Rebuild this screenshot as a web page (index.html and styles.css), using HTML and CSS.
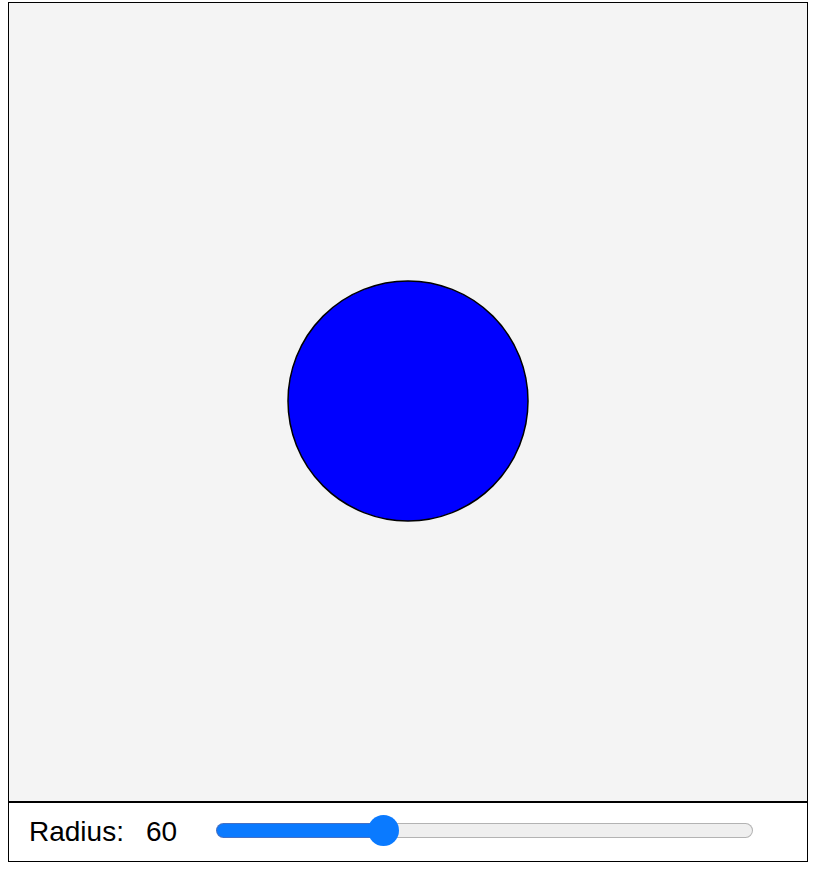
FILE: index.html
```html
<!DOCTYPE html>
<html lang="en">
<head>
<meta charset="utf-8">
<title>Radius</title>
<link rel="stylesheet" href="styles.css">
</head>
<body>
<div class="app">
  <div class="canvas">
    <svg class="stage" width="798" height="798" viewBox="0 0 798 798" xmlns="http://www.w3.org/2000/svg">
      <circle cx="399" cy="398" r="120" fill="#0000ff" stroke="#000" stroke-width="1.5"/>
    </svg>
  </div>
  <div class="controls">
    <label class="label" for="radius">Radius:<span class="value">60</span></label>
    <input class="slider" id="radius" type="range" min="0" max="200" value="60" style="--fill: 31.2%">
  </div>
</div>
</body>
</html>
```

FILE: styles.css
```css
html, body {
  margin: 0;
  padding: 0;
  background: #ffffff;
}

.app {
  margin: 2px 0 0 8px;
  width: 800px;
  font-family: "Liberation Sans", Arial, Helvetica, sans-serif;
}

.canvas {
  box-sizing: border-box;
  width: 800px;
  height: 800px;
  border: 1px solid #000;
  background: #f4f4f4;
}

.stage {
  display: block;
}

.controls {
  box-sizing: border-box;
  width: 800px;
  height: 60px;
  border: 1px solid #000;
  display: flex;
  align-items: center;
  padding-left: 20px;
}

.label {
  font-size: 28px;
  color: #000;
  white-space: nowrap;
}

.value {
  margin-left: 22px;
}

.slider {
  -webkit-appearance: none;
  appearance: none;
  background: transparent;
  width: 537px;
  height: 31px;
  margin: 0 0 3px 39px;
  padding: 0;
}

.slider:focus {
  outline: none;
}

.slider::-webkit-slider-runnable-track {
  box-sizing: border-box;
  height: 15px;
  border-radius: 8px;
  border: 1px solid transparent;
  background:
    linear-gradient(to right, #0a7aff var(--fill), #efefef var(--fill)) padding-box,
    linear-gradient(to right, #4570c4 var(--fill), #b3b3b3 var(--fill)) border-box;
}

.slider::-webkit-slider-thumb {
  -webkit-appearance: none;
  appearance: none;
  width: 31px;
  height: 31px;
  border-radius: 50%;
  background: #0a7aff;
  border: none;
  margin-top: -9px;
}

.slider::-moz-range-track {
  box-sizing: border-box;
  height: 15px;
  border-radius: 8px;
  border: 1px solid transparent;
  background:
    linear-gradient(to right, #0a7aff var(--fill), #efefef var(--fill)) padding-box,
    linear-gradient(to right, #4570c4 var(--fill), #b3b3b3 var(--fill)) border-box;
}

.slider::-moz-range-thumb {
  width: 31px;
  height: 31px;
  border-radius: 50%;
  background: #0a7aff;
  border: none;
}
```
